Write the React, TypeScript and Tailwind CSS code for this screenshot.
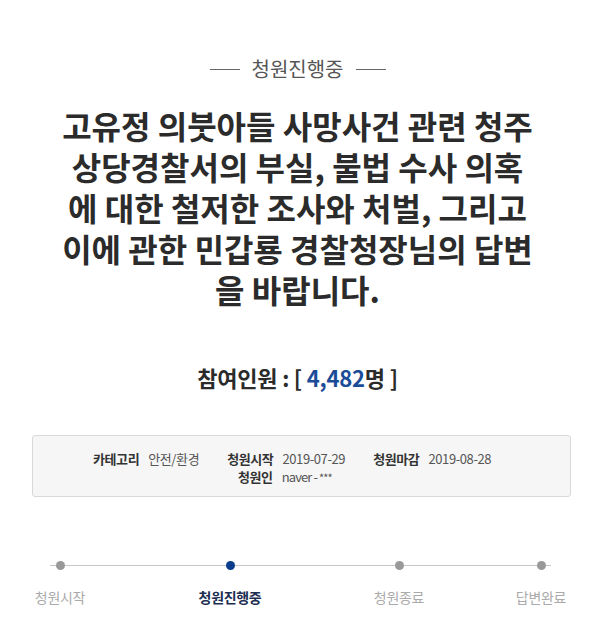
import React from "react";

const font = "font-['Noto_Sans_CJK_KR','Noto_Sans',sans-serif]";

const steps = [
  { label: "청원시작", active: false, ml: "ml-[20px]" },
  { label: "청원진행중", active: true, ml: "ml-[90px]" },
  { label: "청원종료", active: false, ml: "ml-[89px]" },
  { label: "답변완료", active: false, ml: "ml-[62px]" },
];

function InfoItem({ label, value }: { label: string; value: string }) {
  return (
    <span className="mr-[28px] flex items-center gap-[9px]">
      <span className="font-bold text-[#333]">{label}</span>
      <span className="text-[#555]">{value}</span>
    </span>
  );
}

export default function App() {
  return (
    <div className={`${font} w-[595px] h-[632px] bg-white overflow-hidden`}>
      {/* status heading */}
      <div className="pt-[57px] flex items-center justify-center gap-[12px]">
        <span className="block w-[30px] h-px bg-[#666]" />
        <span className="text-[20px] leading-[24px] text-[#555]">청원진행중</span>
        <span className="block w-[30px] h-px bg-[#666]" />
      </div>

      {/* title */}
      <h1 className="mt-[24px] text-center text-[32px] leading-[41px] font-bold text-[#2b2b2b] whitespace-nowrap">
        고유정 의붓아들 사망사건 관련 청주
        <br />
        상당경찰서의 부실, 불법 수사 의혹
        <br />
        에 대한 철저한 조사와 처벌, 그리고
        <br />
        이에 관한 민갑룡 경찰청장님의 답변
        <br />
        을 바랍니다.
      </h1>

      {/* participants */}
      <div className="mt-[52px] text-center text-[22px] leading-[30px] font-bold text-[#2b2b2b] tracking-[-0.2px]">
        참여인원 : [ <span className="text-[#1a4c97]">4,482</span>명 ]
      </div>

      {/* info box */}
      <div className="mt-[43px] ml-[32px] w-[539px] h-[62px] rounded-[3px] border border-[#d9d9d9] bg-[#f6f6f6] pt-[14px] text-[13px] leading-[18px] tracking-[-0.4px]">
        <div className="flex pl-[60px]">
          <InfoItem label="카테고리" value="안전/환경" />
          <InfoItem label="청원시작" value="2019-07-29" />
          <InfoItem label="청원마감" value="2019-08-28" />
        </div>
        <div className="flex pl-[205px]">
          <span className="flex items-center gap-[9px]">
            <span className="font-bold text-[#333]">청원인</span>
            <span className="text-[#555] tracking-[-0.9px]">
              naver - <span className="text-[11px]">***</span>
            </span>
          </span>
        </div>
      </div>

      {/* progress */}
      <div className="relative mt-[64px]">
        <div className="absolute left-[50px] top-[4px] w-[501px] h-px bg-[#c8c8c8]" />
        <div className="relative flex">
          {steps.map((s) => (
            <div key={s.label} className={`${s.ml} w-[80px] flex flex-col items-center`}>
              <span
                className={`block w-[9px] h-[9px] rounded-full ${
                  s.active ? "bg-[#0b3d8c]" : "bg-[#999]"
                }`}
              />
              <span
                className={`mt-[17px] text-[14px] leading-[20px] whitespace-nowrap tracking-[-0.3px] ${
                  s.active ? "font-bold text-[#1c2e52]" : "text-[#aaa]"
                }`}
              >
                {s.label}
              </span>
            </div>
          ))}
        </div>
      </div>
    </div>
  );
}
